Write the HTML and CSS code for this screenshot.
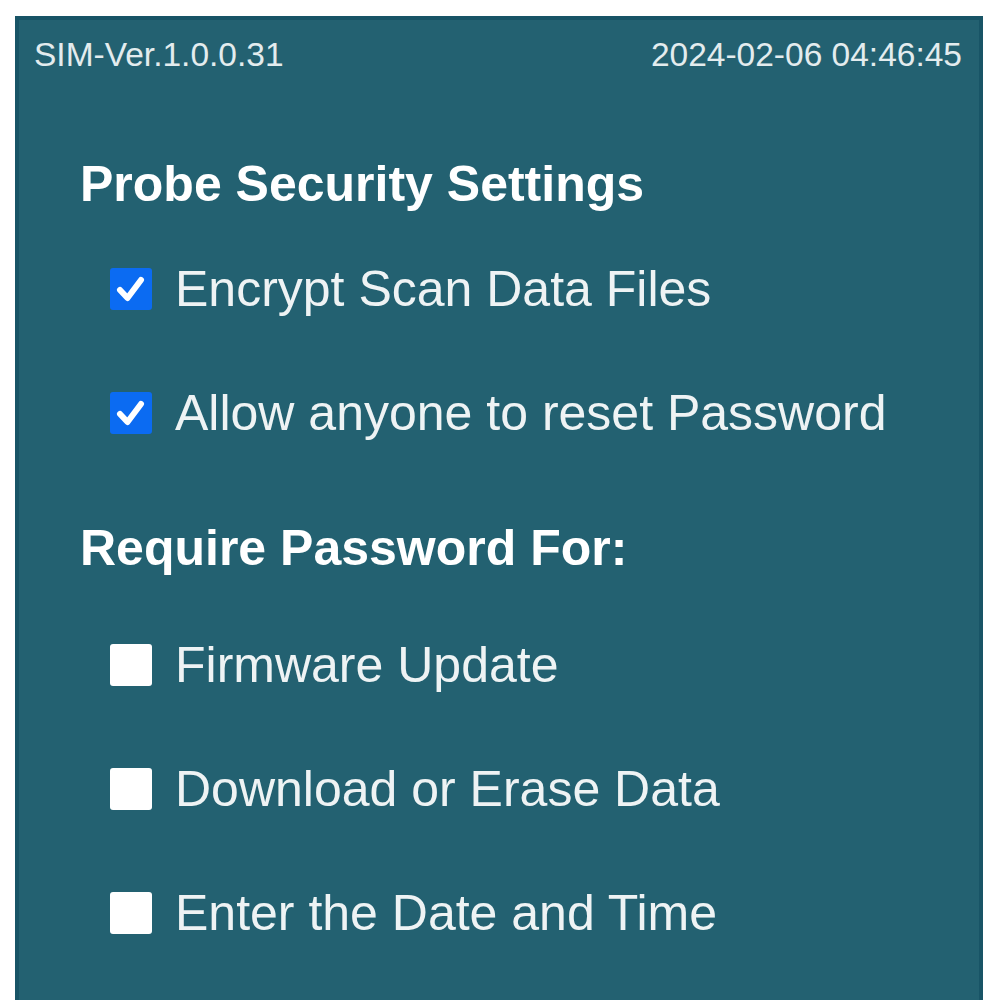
FILE: index.html
```html
<!DOCTYPE html>
<html>
<head>
<meta charset="utf-8">
<link rel="stylesheet" href="styles.css">
</head>
<body>
<div class="panel">
  <div class="topbar">
    <span>SIM-Ver.1.0.0.31</span>
    <span>2024-02-06 04:46:45</span>
  </div>
  <div class="content">
    <h2 class="heading first">Probe Security Settings</h2>
    <div class="option">
      <span class="box checked"><svg viewBox="0 0 42 42" width="42" height="42"><path d="M10 22 L17.5 30 L31 12" fill="none" stroke="#fff" stroke-width="6" stroke-linecap="round" stroke-linejoin="round"/></svg></span>
      <span class="label">Encrypt Scan Data Files</span>
    </div>
    <div class="option">
      <span class="box checked"><svg viewBox="0 0 42 42" width="42" height="42"><path d="M10 22 L17.5 30 L31 12" fill="none" stroke="#fff" stroke-width="6" stroke-linecap="round" stroke-linejoin="round"/></svg></span>
      <span class="label">Allow anyone to reset Password</span>
    </div>
    <h2 class="heading second">Require Password For:</h2>
    <div class="option">
      <span class="box"></span>
      <span class="label">Firmware Update</span>
    </div>
    <div class="option">
      <span class="box"></span>
      <span class="label">Download or Erase Data</span>
    </div>
    <div class="option">
      <span class="box"></span>
      <span class="label">Enter the Date and Time</span>
    </div>
  </div>
</div>
</body>
</html>
```

FILE: styles.css
```css
html, body {
  margin: 0;
  padding: 0;
  background: #ffffff;
  height: 1000px;
  overflow: hidden;
}

.panel {
  box-sizing: border-box;
  margin: 16px 0 0 15px;
  width: 968px;
  height: 984px;
  background: #236171;
  border: 4px solid #185466;
  border-bottom: none;
  font-family: "Liberation Sans", Arial, sans-serif;
  color: #f2f6f7;
}

.topbar {
  display: flex;
  justify-content: space-between;
  align-items: center;
  padding: 18px 17px 0 15px;
  font-size: 33.5px;
  line-height: 33px;
  color: #e3ecee;
}

.content {
  display: flex;
  flex-direction: column;
  padding: 0 0 0 61px;
}

.heading {
  margin: 0;
  font-size: 50px;
  line-height: 50px;
  font-weight: bold;
  color: #ffffff;
}

.heading.first {
  margin-top: 88px;
  margin-bottom: 55px;
}

.heading.second {
  margin-top: 11px;
  margin-bottom: 67px;
}

.option {
  display: flex;
  align-items: center;
  gap: 23px;
  height: 50px;
  margin-left: 30px;
  margin-bottom: 74px;
}

.option:last-child {
  margin-bottom: 0;
}

.box {
  width: 42px;
  height: 42px;
  flex: none;
  background: #ffffff;
  border-radius: 3px;
  display: flex;
}

.box.checked {
  background: #0b6bf2;
}

.label {
  font-size: 50px;
  line-height: 50px;
  color: #eef3f4;
}
```
